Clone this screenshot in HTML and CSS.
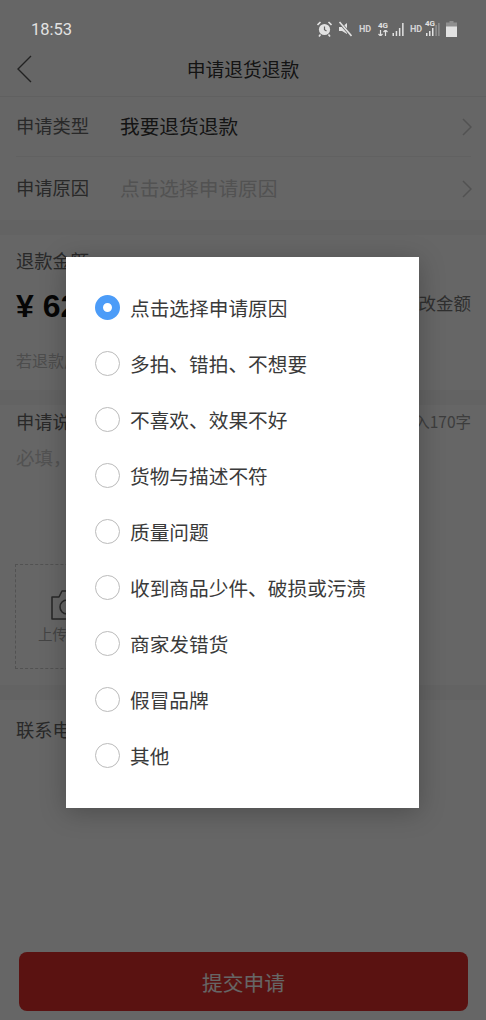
FILE: index.html
```html
<!DOCTYPE html>
<html lang="zh-CN">
<head>
<meta charset="utf-8">
<title>申请退货退款</title>
<link rel="stylesheet" href="styles.css">
</head>
<body>
<div class="screen">
  <div class="status">
    <span class="time">18:53</span>
    <div class="status-icons">
      <svg class="alarm" width="15" height="16" viewBox="0 0 15 16"><circle cx="7.500" cy="8.500" r="5.600" fill="#e2e2e2"/><path d="M7.500 5.500v3.200l2 1.200" fill="none" stroke="#666" stroke-width="1.200"/><path d="M0.500 4l3-3M14.500 4l-3-3M3.500 13.500L2 15.500M11.500 13.500l1.500 2" stroke="#e2e2e2" stroke-width="1.600"/></svg>
      <svg class="mute" width="14" height="16" viewBox="0 0 14 16"><path d="M1 6h3l5-4v11L4 10H1z" fill="#e2e2e2"/><path d="M1.500 1l12 14" stroke="#666" stroke-width="3"/><path d="M1.500 1l12 14" stroke="#e2e2e2" stroke-width="1.600"/></svg>
      <span class="hd hd-a">HD</span>
      <span class="net"><span class="four">4G</span><svg width="10" height="6" viewBox="0 0 10 6"><path d="M2.500 0v6M0.500 4l2 2 2-2M7.500 6V0M5.500 2l2-2 2 2" fill="none" stroke="#e2e2e2" stroke-width="1.200"/></svg></span>
      <svg class="sig" width="13" height="14" viewBox="0 0 13 14"><path d="M0.500 11h1.500v3H0.500zM3.700 9h1.500v5H3.700zM6.900 6h1.500v8H6.900zM10.100 1h1.500v13H10.100z" fill="#e2e2e2"/></svg>
      <span class="hd hd-b">HD</span>
      <span class="combo"><span class="four four-b">4G</span><svg width="15" height="14" viewBox="0 0 15 14"><path d="M1 11h1.500v3H1zM4 9h1.500v5H4zM7 6h1.500v8H7z" fill="#e2e2e2"/><path d="M10.500 3h1.200v11h-1.200zM13.300 1h1.200v13h-1.200z" fill="#999"/></svg></span>
      <svg class="batt" width="11" height="16" viewBox="0 0 11 16"><path d="M3.500 0h4v1.500h3.500V16H0V1.500h3.500z" fill="#8f8f8f"/><path d="M0 5.500h11V16H0z" fill="#e2e2e2"/></svg>
    </div>
  </div>

  <header class="nav">
    <svg class="back" width="16" height="28" viewBox="0 0 16 28"><path d="M15 1L2 14l13 13" fill="none" stroke="#555" stroke-width="1.400"/></svg>
    <h1 class="nav-title">申请退货退款</h1>
  </header>

  <section class="group">
    <div class="row row-first">
      <span class="row-label">申请类型</span>
      <span class="row-value">我要退货退款</span>
      <svg class="chev" width="10" height="18" viewBox="0 0 10 18"><path d="M1 1l8 8-8 8" fill="none" stroke="#ccc" stroke-width="1.500"/></svg>
    </div>
    <div class="row row-second">
      <span class="row-label">申请原因</span>
      <span class="row-value placeholder">点击选择申请原因</span>
      <svg class="chev" width="10" height="18" viewBox="0 0 10 18"><path d="M1 1l8 8-8 8" fill="none" stroke="#ccc" stroke-width="1.500"/></svg>
    </div>
  </section>

  <section class="group amount">
    <div class="amount-label">退款金额</div>
    <div class="amount-line">
      <span class="amount-value">¥ 620</span>
      <span class="amount-edit">修改金额</span>
    </div>
    <div class="amount-hint">若退款成</div>
  </section>

  <section class="group desc">
    <div class="desc-head">
      <span class="desc-label">申请说明</span>
      <span class="desc-count">最多可输入170字</span>
    </div>
    <div class="desc-hint">必填，请</div>
    <div class="upload">
      <svg class="camera" width="34" height="32" viewBox="0 0 34 32"><path d="M2 8h7l3-6h10l3 6h7v22H2z" fill="none" stroke="#666" stroke-width="1.600" stroke-linejoin="round"/><circle cx="17" cy="18" r="7" fill="none" stroke="#666" stroke-width="1.600"/></svg>
      <span class="upload-text">上传凭证</span>
    </div>
  </section>

  <section class="group contact">
    <span class="row-label">联系电话</span>
  </section>

  <button class="submit">提交申请</button>

  <div class="overlay">
    <div class="dialog">
      <div class="opt"><span class="radio on"></span><span>点击选择申请原因</span></div>
      <div class="opt"><span class="radio"></span><span>多拍、错拍、不想要</span></div>
      <div class="opt"><span class="radio"></span><span>不喜欢、效果不好</span></div>
      <div class="opt"><span class="radio"></span><span>货物与描述不符</span></div>
      <div class="opt"><span class="radio"></span><span>质量问题</span></div>
      <div class="opt"><span class="radio"></span><span>收到商品少件、破损或污渍</span></div>
      <div class="opt"><span class="radio"></span><span>商家发错货</span></div>
      <div class="opt"><span class="radio"></span><span>假冒品牌</span></div>
      <div class="opt"><span class="radio"></span><span>其他</span></div>
    </div>
  </div>
</div>
</body>
</html>
```

FILE: styles.css
```css
* { box-sizing: border-box; }
html, body { margin: 0; padding: 0; }
body {
  width: 486px;
  height: 1020px;
  overflow: hidden;
  font-family: "Noto Sans CJK SC", "Noto Sans", sans-serif;
}
.screen {
  position: relative;
  width: 486px;
  height: 1020px;
  background: #fff;
  display: flex;
  flex-direction: column;
  color: #333;
}
.status {
  position: relative;
  z-index: 3;
  height: 58px;
  display: flex;
  align-items: center;
  padding: 0 29px 0 31px;
  justify-content: space-between;
  color: #e2e2e2;
}
.time { font: 16.500px Roboto, sans-serif; }
.status-icons { display: flex; align-items: center; height: 20px; }
.alarm { margin-right: 6px; }
.mute { margin-right: 7px; }
.hd { font: 700 9px/1 Roboto, sans-serif; color: #d4d4d4; width: 12px; white-space: nowrap; }
.hd-a { margin-right: 7px; }
.hd-b { margin-right: 3px; }
.net { display: flex; flex-direction: column; align-items: center; width: 10px; margin-right: 4px; }
.four { font: 700 8px/8px Roboto, sans-serif; color: #e2e2e2; }
.sig { margin-right: 5px; }
.combo { position: relative; width: 15px; height: 14px; margin-right: 6px; }
.combo svg { display: block; }
.four-b { position: absolute; left: 0; top: -2px; }
.nav {
  height: 41px;
  margin-top: -2px;
  border-bottom: 1px solid #f0f0f0;
  display: flex;
  align-items: center;
  justify-content: center;
  position: relative;
}
.back { position: absolute; left: 16px; top: -1px; }
.nav-title { margin: -14px 0 0; font-size: 18.800px; font-weight: 400; line-height: 28px; color: #333; }
.group { background: #fff; }
.row {
  display: flex;
  align-items: center;
  margin: 0 15px 0 16px;
  position: relative;
}
.row-first { height: 60px; padding-bottom: 3px; border-bottom: 1px solid #f2f2f2; }
.row-second { height: 63px; padding-bottom: 3px; }
.row-label { width: 104px; font-size: 18.300px; color: #666; flex: none; }
.row-value { font-size: 19.700px; color: #333; flex: 1; }
.placeholder { color: #ccc; }
.chev { flex: none; margin-right: -1px; margin-bottom: -3px; }
.group + .group { border-top: 15px solid #f8f8f8; }
.amount {
  padding: 12px 15px 0 16px;
  height: 170px;
}
.amount-label { font-size: 18.300px; line-height: 26px; color: #666; }
.amount-line { display: flex; justify-content: space-between; align-items: center; height: 44px; margin-top: 11px; }
.amount-value { font: 700 32px/44px "Liberation Sans", sans-serif; color: #111; }
.amount-edit { font-size: 17.500px; color: #777; margin-bottom: 8px; }
.amount-hint { font-size: 16px; line-height: 20px; color: #c0c0c0; margin-top: 22px; }
.desc {
  height: 295px;
  padding: 3px 15px 0 16px;
}
.desc-head { display: flex; justify-content: space-between; align-items: center; height: 26px; }
.desc-label { font-size: 18.300px; color: #666; }
.desc-count { font-size: 15.500px; color: #999; }
.desc-hint { font-size: 18.500px; color: #ccc; line-height: 28px; margin-top: 9px; }
.upload {
  width: 104px;
  height: 105px;
  margin-top: 93px;
  margin-left: -1px;
  border: 1px dashed #ccc;
  display: flex;
  flex-direction: column;
  align-items: center;
  padding-top: 24px;
}
.camera { display: block; }
.upload-text { font-size: 14.500px; line-height: 20px; color: #aaa; margin-top: 3px; }
.contact {
  height: 75px;
  display: flex;
  align-items: center;
  padding: 0 0 2px 16px;
}
.submit {
  margin: auto 18px 9px 19px;
  height: 59px;
  border: 0;
  border-radius: 8px;
  background: #e22e2c;
  color: #fff;
  font: 400 20.700px "Noto Sans CJK SC", sans-serif;
}
.overlay {
  position: absolute;
  inset: 0;
  z-index: 2;
  background: rgba(0, 0, 0, 0.6);
  display: flex;
  justify-content: center;
  align-items: flex-start;
  padding: 257px 1px 0 0;
}
.dialog {
  width: 353px;
  height: 551px;
  background: #fff;
  padding: 23px 0 25px 29px;
  box-shadow: 0 4px 24px rgba(0, 0, 0, 0.25);
}
.opt {
  height: 55.900px;
  display: flex;
  align-items: center;
  gap: 10px;
  font-size: 19.700px;
  color: #3a3a3a;
}
.radio {
  width: 25px;
  height: 25px;
  border-radius: 50%;
  border: 1.500px solid #bbb;
  flex: none;
}
.radio.on { border: 8px solid #4c9cf8; }
```
